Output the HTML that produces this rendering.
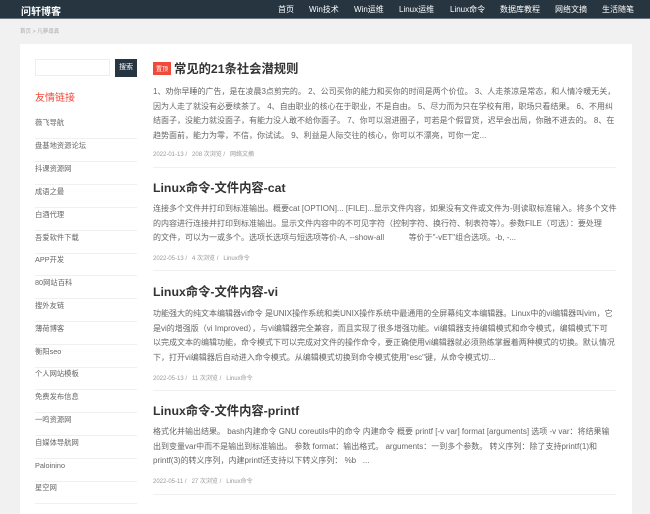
<!DOCTYPE html>
<html><head><meta charset="utf-8"><style>
*{margin:0;padding:0;box-sizing:border-box}
body{width:650px;height:500px;overflow:hidden;background:#f1f1f1;font-family:"Liberation Sans","Noto Sans CJK SC",sans-serif;position:relative}
.top{position:absolute;left:0;top:0;width:650px;height:19px;background:#263540;border-bottom:1px solid #6b7780}
.logo{position:absolute;left:21px;top:3px;color:#fff;font-size:10px;font-weight:bold}
.nav{position:absolute;top:4px;color:#fff;font-size:8px;white-space:nowrap}
.bc{position:absolute;left:20px;top:27px;font-size:5.5px;color:#aaa}
.card{position:absolute;left:20px;top:44px;width:612px;height:470px;background:#fff}
.sb{position:absolute;left:35px;top:59px;width:75px;height:17px;border:1px solid #eee}
.btn{position:absolute;left:115px;top:59px;width:22px;height:18px;background:#263540;color:#fff;font-size:7px;line-height:18px;text-align:center}
.fl{position:absolute;left:35px;top:89px;color:#f04a3a;font-size:10px}
.li{position:absolute;left:35px;width:102px;font-size:7.3px;color:#666;border-bottom:1px solid #f0f0f0;height:23px;line-height:13px}
.t{position:absolute;left:153px;font-size:12.3px;font-weight:bold;color:#333;white-space:nowrap}
.p{position:absolute;left:153px;font-size:8px;line-height:14.5px;color:#666;white-space:nowrap}
.m{position:absolute;left:153px;font-size:6px;color:#999;white-space:nowrap}
.hr{position:absolute;left:153px;width:463px;height:1px;background:#f0f0f0}
.tag{display:inline-block;background:#f04a3a;color:#fff;font-size:6px;padding:2px 3px;vertical-align:2px;font-weight:normal;margin-right:3px}
</style></head><body>
<div class="top"><div class="logo">问轩博客</div>
<span class="nav" style="left:278px">首页</span>
<span class="nav" style="left:309px">Win技术</span>
<span class="nav" style="left:354px">Win运维</span>
<span class="nav" style="left:399px">Linux运维</span>
<span class="nav" style="left:450px">Linux命令</span>
<span class="nav" style="left:500px">数据库教程</span>
<span class="nav" style="left:555px">网络文摘</span>
<span class="nav" style="left:602px">生活随笔</span>
</div>
<div class="bc">首页 &gt; 凡夢尋真</div>
<div class="card"></div>
<div class="sb"></div><div class="btn">搜索</div>
<div class="fl">友情链接</div>
<div class="li" style="top:116px">薇飞导航</div>
<div class="li" style="top:139px">盘基地资源论坛</div>
<div class="li" style="top:162px">抖课资源网</div>
<div class="li" style="top:185px">成语之最</div>
<div class="li" style="top:208px">白酒代理</div>
<div class="li" style="top:231px">吾爱软件下载</div>
<div class="li" style="top:253px">APP开发</div>
<div class="li" style="top:276px">80网站百科</div>
<div class="li" style="top:299px">搜外友链</div>
<div class="li" style="top:322px">薄荷博客</div>
<div class="li" style="top:345px">衡阳seo</div>
<div class="li" style="top:367px">个人网站模板</div>
<div class="li" style="top:390px">免费发布信息</div>
<div class="li" style="top:413px">一鸣资源网</div>
<div class="li" style="top:436px">自媒体导航网</div>
<div class="li" style="top:459px">Paloinino</div>
<div class="li" style="top:481px">星空网</div>

<div class="t" style="top:59px"><span class="tag">置顶</span>常见的21条社会潜规则</div>
<div class="p" style="top:85px">1、劝你早睡的广告，是在凌晨3点剪完的。 2、公司买你的能力和买你的时间是两个价位。 3、人走茶凉是常态，和人情冷暖无关，<br>因为人走了就没有必要续茶了。 4、自由职业的核心在于职业，不是自由。 5、尽力而为只在学校有用，职场只看结果。 6、不用纠<br>结面子，没能力就没面子，有能力没人敢不给你面子。 7、你可以混进圈子，可若是个假冒货，迟早会出局，你融不进去的。 8、在<br>趋势面前，能力为零，不信，你试试。 9、利益是人际交往的核心，你可以不漂亮，可你一定...</div>
<div class="m" style="top:149px">2022-01-13 / &nbsp; 208 次浏览 / &nbsp; 网络文摘</div>
<div class="hr" style="top:167px"></div>

<div class="t" style="top:178px">Linux命令-文件内容-cat</div>
<div class="p" style="top:202px">连接多个文件并打印到标准输出。概要cat [OPTION]... [FILE]...显示文件内容，如果没有文件或文件为-则读取标准输入。将多个文件<br>的内容进行连接并打印到标准输出。显示文件内容中的不可见字符（控制字符、换行符、制表符等）。参数FILE（可选）：要处理<br>的文件，可以为一或多个。选项长选项与短选项等价-A, --show-all &nbsp; &nbsp; &nbsp; &nbsp; &nbsp; 等价于"-vET"组合选项。-b, -...</div>
<div class="m" style="top:253px">2022-05-13 / &nbsp; 4 次浏览 / &nbsp; Linux命令</div>
<div class="hr" style="top:270px"></div>

<div class="t" style="top:282px">Linux命令-文件内容-vi</div>
<div class="p" style="top:307px">功能强大的纯文本编辑器vi命令 是UNIX操作系统和类UNIX操作系统中最通用的全屏幕纯文本编辑器。Linux中的vi编辑器叫vim，它<br>是vi的增强版（vi Improved），与vi编辑器完全兼容，而且实现了很多增强功能。vi编辑器支持编辑模式和命令模式，编辑模式下可<br>以完成文本的编辑功能，命令模式下可以完成对文件的操作命令，要正确使用vi编辑器就必须熟练掌握着两种模式的切换。默认情况<br>下，打开vi编辑器后自动进入命令模式。从编辑模式切换到命令模式使用"esc"键，从命令模式切...</div>
<div class="m" style="top:373px">2022-05-13 / &nbsp; 11 次浏览 / &nbsp; Linux命令</div>
<div class="hr" style="top:390px"></div>

<div class="t" style="top:401px">Linux命令-文件内容-printf</div>
<div class="p" style="top:425px">格式化并输出结果。 bash内建命令 GNU coreutils中的命令 内建命令 概要 printf [-v var] format [arguments] 选项 -v var：将结果输<br>出到变量var中而不是输出到标准输出。 参数 format：输出格式。 arguments：一到多个参数。 转义序列：除了支持printf(1)和<br>printf(3)的转义序列，内建printf还支持以下转义序列： %b &nbsp; ...</div>
<div class="m" style="top:476px">2022-05-11 / &nbsp; 27 次浏览 / &nbsp; Linux命令</div>
<div class="hr" style="top:494px"></div>
</body></html>
